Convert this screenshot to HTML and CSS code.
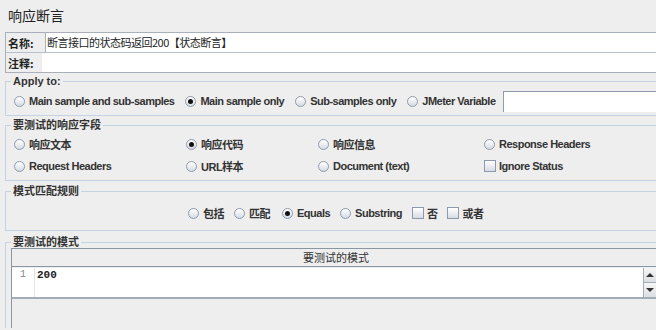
FILE: index.html
```html
<!DOCTYPE html>
<html>
<head>
    <title>响应断言</title>
    <link rel="stylesheet" href="styles.css">
</head>
<body>
    <div class="title">响应断言</div>

    <div class="info">
        <div class="info-row">
            <label class="info-label name-label">名称:</label>
            <div class="info-field name-field">断言接口的状态码返回200【状态断言】</div>
        </div>
        <div class="info-row">
            <label class="info-label">注释:</label>
            <div class="info-field comment-field"></div>
        </div>
    </div>

    <fieldset class="group apply">
        <legend>Apply to:</legend>
        <div class="apply-row">
            <span class="opt"><span class="radio"></span>Main sample and sub-samples</span>
            <span class="opt"><span class="radio on"></span>Main sample only</span>
            <span class="opt"><span class="radio"></span>Sub-samples only</span>
            <span class="opt"><span class="radio"></span>JMeter Variable</span>
            <div class="var-input"></div>
        </div>
    </fieldset>

    <fieldset class="group fields">
        <legend>要测试的响应字段</legend>
        <div class="fields-grid">
            <span class="opt"><span class="radio"></span>响应文本</span>
            <span class="opt"><span class="radio on"></span>响应代码</span>
            <span class="opt"><span class="radio"></span>响应信息</span>
            <span class="opt"><span class="radio"></span>Response Headers</span>
            <span class="opt"><span class="radio"></span>Request Headers</span>
            <span class="opt"><span class="radio"></span>URL样本</span>
            <span class="opt"><span class="radio"></span>Document (text)</span>
            <span class="opt"><span class="check"></span>Ignore Status</span>
        </div>
    </fieldset>

    <fieldset class="group rules">
        <legend>模式匹配规则</legend>
        <div class="rules-row">
            <span class="opt"><span class="radio"></span>包括</span>
            <span class="opt wide"><span class="radio"></span>匹配</span>
            <span class="opt"><span class="radio on"></span>Equals</span>
            <span class="opt"><span class="radio"></span>Substring</span>
            <span class="opt"><span class="check"></span>否</span>
            <span class="opt"><span class="check"></span>或者</span>
        </div>
    </fieldset>

    <fieldset class="group patterns">
        <legend>要测试的模式</legend>
        <div class="table">
            <div class="table-head">要测试的模式</div>
            <div class="table-body">
                <div class="gutter">1</div>
                <div class="code">200</div>
                <div class="scroll">
                    <div class="arrow up"></div>
                    <div class="arrow down"></div>
                </div>
            </div>
        </div>
    </fieldset>
</body>
</html>
```

FILE: styles.css
```css
body {
    margin: 0;
    background-color: #eeeeee;
    font-family: "Liberation Sans", "Noto Sans CJK SC", sans-serif;
    color: #333333;
    overflow: hidden;
    height: 330px;
}
.title {
    font-family: "Noto Sans CJK SC", sans-serif;
    font-size: 14px;
    line-height: 20px;
    padding: 5px 0 0 8px;
    height: 27px;
    color: #222222;
}
.info {
    margin-left: 5px;
    border-top: 1px solid #a9b0ba;
    border-left: 1px solid #a9b0ba;
    border-bottom: 1px solid #a9b0ba;
}
.info-row {
    display: flex;
    align-items: center;
    height: 19px;
}
.info-row + .info-row {
    border-top: 1px solid #b8c0ca;
}
.info-label {
    font-family: "Noto Sans CJK SC", sans-serif;
    font-weight: bold;
    font-size: 11px;
    width: 34px;
    padding-left: 2px;
    color: #222222;
}
.name-label {
    width: 37px;
}
.info-field {
    flex: 1;
    height: 100%;
    background-color: white;
}
.name-field {
    border-left: 1px solid #a9b0ba;
    font-family: "Noto Sans CJK SC", sans-serif;
    font-size: 11px;
    letter-spacing: -0.5px;
    line-height: 18px;
    padding-left: 1px;
    color: #222222;
}
.group {
    margin: 0 -4px 0 5px;
    padding: 0;
    border: 1px solid #c3d3e4;
    border-right: none;
}
.group legend {
    margin-left: 5px;
    padding: 0 2px;
    font-size: 11px;
    font-weight: bold;
    line-height: 12px;
    color: #333333;
}
.apply {
    margin-top: 2px;
}
.apply-row {
    display: flex;
    align-items: center;
    height: 26px;
    padding: 1px 0 1px 8px;
}
.opt {
    display: inline-flex;
    align-items: center;
    font-size: 11px;
    font-weight: bold;
    letter-spacing: -0.5px;
    white-space: nowrap;
    color: #333333;
}
.apply-row .opt {
    margin-right: 11px;
}
.radio {
    width: 11px;
    height: 11px;
    border-radius: 50%;
    border: 1px solid #8e9aab;
    background: linear-gradient(#ffffff, #d6dce4);
    margin-right: 4px;
    box-sizing: border-box;
    display: inline-flex;
    align-items: center;
    justify-content: center;
}
.radio.on::after {
    content: "";
    width: 5px;
    height: 5px;
    border-radius: 50%;
    background-color: #111111;
}
.check {
    width: 12px;
    height: 12px;
    border: 1px solid #8e9aab;
    background: linear-gradient(#ffffff, #d6dce4);
    margin-right: 3px;
    box-sizing: border-box;
}
.var-input {
    flex: 1;
    height: 20px;
    margin-left: -4px;
    background-color: white;
    border-top: 1px solid #8e9aab;
    border-left: 1px solid #8e9aab;
}
.fields {
    margin-top: 3px;
}
.fields-grid {
    display: grid;
    grid-template-columns: 172px 132px 166px 1fr;
    grid-auto-rows: 22px;
    align-items: center;
    padding: 2px 0 3px 8px;
}
.rules {
    margin-top: 4px;
}
.rules-row {
    display: flex;
    align-items: center;
    height: 26px;
    padding: 3px 0 4px 182px;
}
.rules-row .opt {
    margin-right: 10px;
}
.rules-row .wide {
    margin-right: 12px;
}
.patterns {
    margin-top: 5px;
    border-bottom: none;
}
.table {
    margin-left: 5px;
    border: 1px solid #8b96a3;
    border-right: none;
    border-bottom: none;
    height: 80px;
    box-sizing: border-box;
}
.table-head {
    height: 17px;
    line-height: 17px;
    text-align: center;
    font-family: "Noto Sans CJK SC", sans-serif;
    font-size: 11px;
    color: #333333;
    border-bottom: 1px solid #8b96a3;
}
.table-body {
    display: flex;
    height: 29px;
    background-color: white;
    border-bottom: 2px solid #a3adb8;
    margin-top: 1px;
}
.gutter {
    width: 22px;
    border-right: 1px solid #e4e4e4;
    color: #888888;
    font-family: "Liberation Mono", monospace;
    font-size: 10px;
    text-align: center;
    line-height: 14px;
}
.code {
    flex: 1;
    font-family: "Liberation Mono", monospace;
    font-weight: bold;
    font-size: 11px;
    line-height: 14px;
    padding-left: 2px;
    color: #222222;
}
.scroll {
    width: 12px;
    margin-right: 4px;
    border-left: 1px solid #a3adb8;
    display: flex;
    flex-direction: column;
}
.arrow {
    flex: 1;
    display: flex;
    align-items: center;
    justify-content: center;
    background: linear-gradient(#f6f6f6, #dcdfe3);
}
.arrow.up {
    border-bottom: 1px solid #a3adb8;
}
.arrow.up::after {
    content: "";
    border-left: 4px solid transparent;
    border-right: 4px solid transparent;
    border-bottom: 4px solid #333333;
}
.arrow.down::after {
    content: "";
    border-left: 4px solid transparent;
    border-right: 4px solid transparent;
    border-top: 4px solid #333333;
}
```
